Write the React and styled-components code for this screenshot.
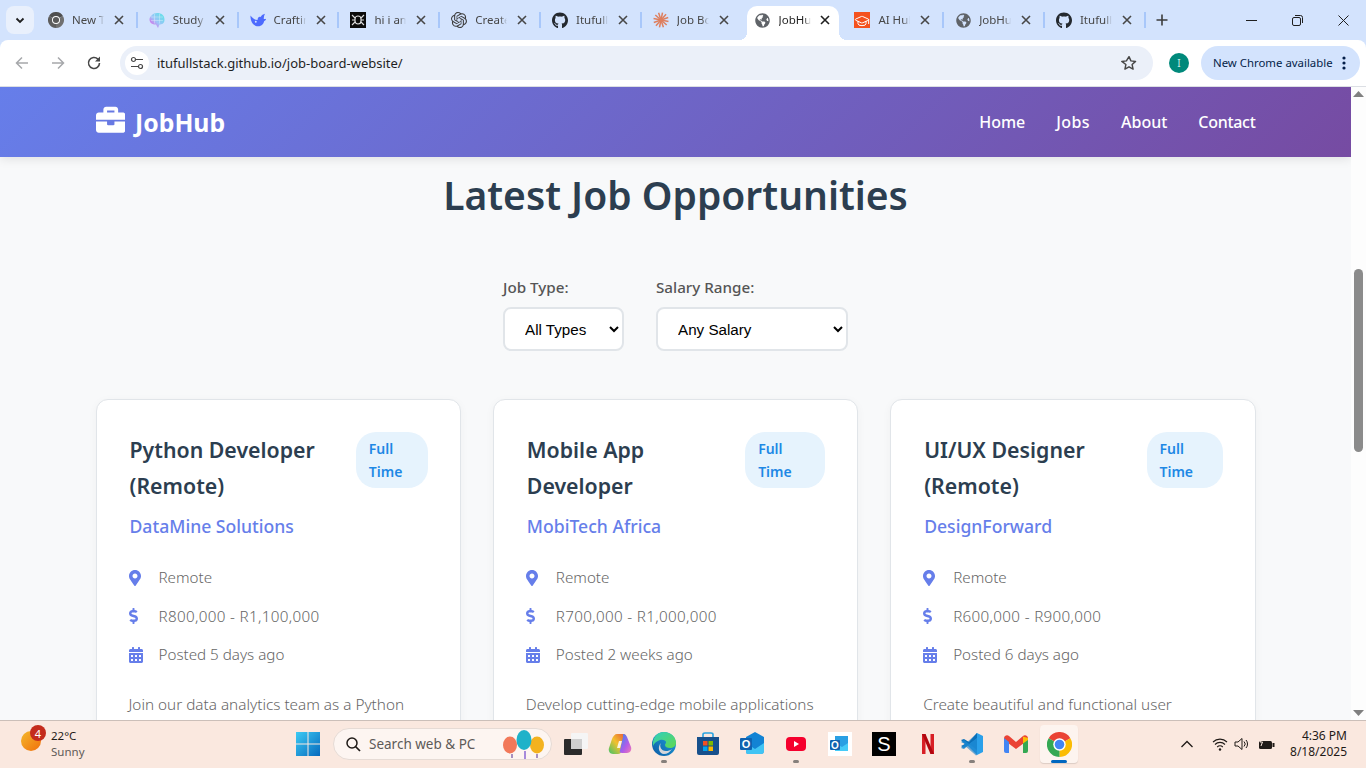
import React from "react";
import styled, { createGlobalStyle } from "styled-components";
import { FaBriefcase, FaMapMarkerAlt, FaDollarSign, FaCalendarAlt, FaGithub, FaGlobeAmericas } from "react-icons/fa";
import { SiOpenai } from "react-icons/si";
import { GraduationCap } from "lucide-react";

const Global = createGlobalStyle`
  html, body { margin: 0; padding: 0; height: 100%; overflow: hidden; }
  body { font-family: "Noto Sans", "Open Sans", sans-serif; }
  #root { height: 100vh; }
  * { box-sizing: border-box; }
`;

const UI = `"Noto Sans", "Open Sans", sans-serif`;
const PAGE = `"Noto Sans", "Open Sans", sans-serif`;

const Screen = styled.div`
  height: 768px; width: 1366px; display: flex; flex-direction: column; overflow: hidden;
  background: #d3e3fd;
`;
/* ---------- tab strip ---------- */
const TabStrip = styled.div`
  height: 40px; flex: none; display: flex; align-items: flex-start; padding-left: 6px; padding-top: 6px;
  background: #d3e3fd; font-family: ${UI};
`;
const TabSearch = styled.div`
  width: 28px; height: 28px; border-radius: 8px; background: #e9f0fc; display: flex; align-items: center; justify-content: center;
  margin-right: 3px; flex: none;
`;
const TabRow = styled.div`display: flex; height: 34px;`;
const Tab = styled.div`
  width: 100.8px; height: 34px; position: relative; display: flex; align-items: center; padding: 0 0 6px ${p => p.$active ? 12 : 11}px; flex: none;
  color: ${p => p.$active ? "#1f1f1f" : "#474747"};
  ${p => p.$sep && `&::after { content: ""; position: absolute; right: 0; top: 6px; height: 16px; width: 2px; background: #a8c7fa; }`}
`;
const ActiveShape = styled.div`
  position: absolute; left: 4px; right: 4px; top: 0; bottom: 0; background: #fff; border-radius: 10px 10px 0 0;
  &::before, &::after { content: ""; position: absolute; bottom: 0; width: 8px; height: 8px; background: radial-gradient(circle at 0 0, transparent 8px, #fff 8px); }
  &::before { left: -8px; }
  &::after { right: -8px; background: radial-gradient(circle at 100% 0, transparent 8px, #fff 8px); }
`;
const Fav = styled.div`width: 16px; height: 16px; flex: none; position: relative; display: flex; align-items: center; justify-content: center;`;
const TabLabel = styled.div`
  position: relative; margin-left: 8px; width: 32px; overflow: hidden; white-space: nowrap; font-size: 11.5px; line-height: 16px;
  -webkit-mask-image: linear-gradient(90deg, #000 78%, transparent 100%); mask-image: linear-gradient(90deg, #000 78%, transparent 100%);
`;
const TabClose = styled.div`position: absolute; left: 76px; top: 8px; width: 12px; height: 12px; display: flex;`;
const NewTab = styled.div`width: 14px; height: 14px; margin: 7px 0 0 9px; flex: none; display: flex;`;
const WinControls = styled.div`margin-left: auto; display: flex; height: 28px; align-items: center;`;
const WinBtn = styled.div`width: 46px; height: 28px; display: flex; align-items: center; justify-content: center;`;

/* ---------- toolbar ---------- */
const Toolbar = styled.div`
  height: 47px; flex: none; background: #fff; border-radius: 8px 8px 0 0; border-bottom: 1px solid #dcdfe4;
  display: flex; align-items: flex-start; padding: 6px 6px 0 4px; font-family: ${UI};
`;
const NavBtn = styled.div`width: 36px; height: 34px; display: flex; align-items: center; justify-content: center; flex: none;`;
const Omnibox = styled.div`
  margin-left: 8px; width: 1033px; height: 34px; border-radius: 17px; background: #ebf0f9; display: flex; align-items: center; padding: 0 16px 0 5px; flex: none;
`;
const InfoChip = styled.div`width: 24px; height: 24px; border-radius: 50%; background: #fff; display: flex; align-items: center; justify-content: center; flex: none;`;
const Url = styled.div`margin-left: 8px; font-size: 13px; color: #1f1f1f; flex: 1; white-space: nowrap;`;
const Avatar = styled.div`
  width: 20px; height: 20px; border-radius: 50%; background: #00897b; color: #cfe9e5; font-size: 10px; display: flex; align-items: center; justify-content: center;
  margin: 7px 0 0 16px; flex: none;
`;
const UpdatePill = styled.div`
  margin-left: 12px; width: 159px; height: 34px; border-radius: 17px; background: #d3e3fd; color: #041e49; font-size: 11.4px; display: flex; align-items: center; padding: 0 0 2px 12px; white-space: nowrap; position: relative;
`;
const PillDots = styled.span`position: absolute; right: 14px; top: 10px; display: flex;`;

/* ---------- page ---------- */
const Viewport = styled.div`flex: 1; min-height: 0; display: flex; background: #f8f9fa; overflow: hidden;`;
const Page = styled.div`flex: 1; min-width: 0; overflow: hidden; font-family: ${PAGE}; position: relative;`;
const Header = styled.header`
  height: 70px; background: linear-gradient(135deg, #667eea 0%, #764ba2 100%); box-shadow: 0 2px 10px rgba(0,0,0,.1); position: relative; z-index: 2;
`;
const HeaderInner = styled.div`
  max-width: 1200px; margin: 0 auto; padding: 0 20px; height: 100%; display: flex; align-items: center; justify-content: space-between; color: #fff;
`;
const Logo = styled.div`display: flex; align-items: center; gap: 10px; font-size: 24.8px; font-weight: 700; svg { margin-top: -4px; }`;
const NavList = styled.nav`display: flex; gap: 31px; font-size: 16px; font-weight: 500;`;
const NavItem = styled.span`letter-spacing: ${p => p.$ls || 0}px;`;
const Main = styled.main`max-width: 1200px; margin: 0 auto; padding: 11px 20px 0;`;
const Title = styled.h2`margin: 0; text-align: center; font-size: 39px; line-height: 54px; font-weight: 600; color: #2c3e50;`;
const Filters = styled.div`display: flex; justify-content: center; gap: 32px; margin-top: 53px;`;
const FilterGroup = styled.div`display: flex; flex-direction: column; align-items: flex-start;`;
const FilterLabel = styled.label`font-size: 15.2px; line-height: 24px; font-weight: 500; color: #555; margin-bottom: 8px;`;
const Select = styled.select`
  height: 44px; width: ${p => p.$w}px; padding: 0 16px; border: 2px solid #e1e5e9; border-radius: 8px; background: #fff; font-family: "Liberation Sans", Arial, sans-serif; font-size: 15.2px; color: #000;
`;
const Grid = styled.div`display: grid; grid-template-columns: repeat(3, 1fr); gap: 32px; margin-top: 48px;`;
const Card = styled.article`
  background: #fff; border: 1px solid #e1e5e9; border-radius: 12px; padding: 32px; box-shadow: 0 2px 10px rgba(0,0,0,.04); height: 400px;
`;
const CardTop = styled.div`display: flex; justify-content: space-between; align-items: flex-start; gap: 16px;`;
const JobTitle = styled.h3`margin: 0; padding-left: 1px; font-size: 21.3px; line-height: 36px; font-weight: 600; color: #2c3e50;`;
const Badge = styled.span`
  flex: none; width: ${p => p.$w}px; padding: 5px 13px; background: #e6f3fd; color: #1e88e5; border-radius: 20px; font-size: 14px; line-height: 23px; font-weight: 600;
`;
const Company = styled.div`margin-top: 8px; padding-left: 1px; font-size: 17.6px; line-height: 29px; font-weight: 500; color: #667eea;`;
const Meta = styled.div`margin-top: 24px; display: flex; flex-direction: column; gap: 13.5px;`;
const MetaRow = styled.div`display: flex; align-items: center; font-size: 15.2px; line-height: 25px; font-weight: 300; color: #666;`;
const MetaIcon = styled.span`width: 30px; flex: none; display: flex; color: #667eea; svg { width: ${p => p.$w}px; height: 16px; }`;
const PayText = styled.span`letter-spacing: .33px;`;
const Desc = styled.p`margin: 25px 0 0; font-size: 15.3px; line-height: 25px; font-weight: 300; color: #666;`;

/* ---------- scrollbar ---------- */
const ScrollTrack = styled.div`width: 15px; flex: none; background: #fdfdfd; display: flex; flex-direction: column; align-items: center; padding-top: 4px;`;
const ScrollThumb = styled.div`width: 9px; height: 183px; border-radius: 5px; background: #8b8b8b; margin-top: 172px;`;
const ScrollDown = styled.div`margin-top: auto; margin-bottom: 4px; display: flex;`;

/* ---------- taskbar ---------- */
const Taskbar = styled.div`
  height: 48px; flex: none; background: #fae8df; border-top: 1px solid #cbbfb9; display: flex; align-items: center; padding-bottom: 1px; font-family: ${UI}; position: relative;
`;
const Weather = styled.div`width: 296px; display: flex; align-items: center; padding-left: 21px; flex: none; position: relative;`;
const Sun = styled.div`width: 20px; height: 20px; border-radius: 50%; background: linear-gradient(135deg, #f4b92c, #f06f0c); flex: none; margin-top: -6px;`;
const CountBadge = styled.div`position: absolute; left: 30px; top: -3px; width: 16px; height: 16px; border-radius: 50%; background: #c42b1c; color: #fff; font-size: 11px; display: flex; align-items: center; justify-content: center; line-height: 1;`;
const WeatherText = styled.div`margin-left: 10px; font-size: 11.5px; line-height: 16px; color: #1f1a17;`;
const Muted = styled.div`color: #5f5a57;`;
const SearchPill = styled.div`
  margin-left: 13px; width: 219px; height: 32px; flex: none; border-radius: 16px; background: #fdf5f1; border: 1px solid #e6dbd5; display: flex; align-items: center; padding-left: 11px; position: relative;
  font-size: 13.5px; color: #5d5a58;
`;
const SearchText = styled.span`margin-left: 8px; white-space: nowrap;`;
const Balloons = styled.span`position: absolute; right: 6px; top: 1px; display: flex;`;
const AppCell = styled.div`
  width: 44px; height: 38px; flex: none; display: flex; align-items: center; justify-content: center; position: relative; border-radius: 4px;
  margin-left: ${p => p.$first ? 2 : 0}px;
  ${p => p.$active && `background: #fdf4ef; box-shadow: 0 1px 1px rgba(0,0,0,.12); width: 38px; margin: 0 4px 0 2px;`}
  ${p => p.$dot && `&::after { content: ""; position: absolute; bottom: 0; left: 50%; margin-left: ${p.$active ? -8 : -3}px; width: ${p.$active ? 16 : 6}px; height: 3px; border-radius: 2px; background: ${p.$active ? "#0067c0" : "#86807c"}; }`}
`;
const Tray = styled.div`margin-left: auto; display: flex; align-items: center; padding-right: 19px;`;
const TrayIcon = styled.span`display: flex; margin-right: ${p => p.$mr || 0}px;`;
const Clock = styled.div`margin-left: 15px; text-align: right; font-size: 12px; line-height: 16px; color: #1f1a17;`;
const OText = styled.text`font-family: "Liberation Sans", sans-serif; font-weight: 700;`;

/* ---------- drawings ---------- */
const X = ({ c = "#474747" }) => (
  <svg width="12" height="12" viewBox="0 0 12 12"><path d="M2 2l8 8M10 2l-8 8" stroke={c} strokeWidth="1.6" /></svg>
);
const ChromeMark = ({ size = 16, mono }) => (
  <svg width={size} height={size} viewBox="0 0 24 24">
    <path d="M12 12L1.6 6A12 12 0 0 1 22.4 6Z" fill={mono ? "#4f4f4f" : "#ea4335"} />
    <path d="M12 12L22.4 6A12 12 0 0 1 12 24Z" fill={mono ? "#707070" : "#fbbc04"} />
    <path d="M12 12L12 24A12 12 0 0 1 1.6 6Z" fill={mono ? "#5e5e5e" : "#34a853"} />
    <circle cx="12" cy="12" r="6" fill="#fff" />
    <circle cx="12" cy="12" r="4.6" fill={mono ? "#5a5a5a" : "#4285f4"} />
  </svg>
);
const BrainIcon = () => (
  <svg width="17" height="17" viewBox="0 0 16 16">
    <defs><linearGradient id="br" x1="0" y1="1" x2="1" y2="0"><stop offset="0" stopColor="#f43fe0" /><stop offset=".45" stopColor="#9fc4f8" /><stop offset="1" stopColor="#55e6e6" /></linearGradient></defs>
    <path d="M8 .5c4 0 7.500 2 7.500 6.500s-3 5-5 5L9 15.500 7 12C3 12 .5 10 .5 7S4 .5 8 .5z" fill="url(#br)" />
    <path d="M2 4.500h12M2 8h12M5.500 1.500v9.500M10.500 1.500v9.500" stroke="#fff" strokeWidth=".5" opacity=".6" />
  </svg>
);
const Whale = () => (
  <svg width="18" height="16" viewBox="0 0 18 16">
    <path d="M.5 3c0 7 3 12 8.500 12 4.500 0 6.500-3.500 7-6 1 0 2-1 2-2.500-1 .5-1.500.5-2.500.5C15.500 4.500 16 2.500 17 1c-2 .5-4 1.500-5 3.500C10 3.500 8.500 5.500 8.500 8 5.500 8 3 6 .5 3z" fill="#4d6bfe" />
    <circle cx="6.500" cy="10" r="1.100" fill="#d3e3fd" />
  </svg>
);
const SpiderIcon = () => (
  <svg width="16" height="16" viewBox="0 0 16 16">
    <rect width="16" height="16" fill="#0b0b0b" />
    <path d="M8 4a3 3 0 0 1 3 3v2a3 3 0 0 1-6 0V7a3 3 0 0 1 3-3z" fill="none" stroke="#ddd" strokeWidth="1.2" />
    <path d="M2 3l3 3M14 3l-3 3M2 8h3M14 8h-3M2 13l3-3M14 13l-3-3" stroke="#ddd" strokeWidth="1.1" />
  </svg>
);
const Burst = () => (
  <svg width="16" height="16" viewBox="0 0 16 16">
    {Array.from({ length: 12 }).map((_, i) => (
      <line key={i} x1="8" y1="8" x2={8 + 7.6 * Math.cos((i * Math.PI) / 6 + 0.2)} y2={8 + 7.6 * Math.sin((i * Math.PI) / 6 + 0.2)} stroke="#de7f5f" strokeWidth="1.5" />
    ))}
  </svg>
);
const CapIcon = () => (
  <svg width="16" height="16" viewBox="0 0 16 16"><rect width="16" height="16" fill="#f4511e" />
    <foreignObject width="16" height="16"><GraduationCap size={16} color="#fff" strokeWidth={1.5} /></foreignObject>
  </svg>
);
const Windows = () => (
  <svg width="24" height="24" viewBox="0 0 24 24">
    <defs><linearGradient id="wn" x1="0" y1="0" x2="1" y2="1"><stop offset="0" stopColor="#3ccbf4" /><stop offset="1" stopColor="#0669bd" /></linearGradient></defs>
    <path d="M0 0h11.500v11.500H0zM12.500 0H24v11.500H12.500zM0 12.500h11.500V24H0zM12.500 12.500H24V24H12.500z" fill="url(#wn)" />
  </svg>
);
const BalloonArt = () => (
  <svg width="44" height="30" viewBox="0 0 44 30">
    <path d="M24 21v8" stroke="#a78bdb" strokeWidth="2" />
    <path d="M11 24v4M36 24v4" stroke="#8a6fb0" strokeWidth="1.5" />
    <ellipse cx="9" cy="15" rx="7" ry="8.500" fill="#f2795a" />
    <ellipse cx="36" cy="15" rx="7" ry="8.500" fill="#f3b21f" />
    <ellipse cx="23" cy="10" rx="7.500" ry="10" fill="#1fb2c9" />
  </svg>
);
const TaskView = () => (
  <svg width="24" height="24" viewBox="0 0 24 24">
    <rect x="7" y="1" width="17" height="16" fill="#f5f5f5" rx="1" />
    <rect x="0" y="7" width="18" height="16" rx="1" fill="#2b2b2b" />
    <rect x="7" y="7" width="11" height="10" fill="#cfcfcf" />
  </svg>
);
const Copilot = () => (
  <svg width="24" height="24" viewBox="0 0 24 24">
    <defs>
      <linearGradient id="cp1" x1="0" y1="1" x2="1" y2="0"><stop offset="0" stopColor="#3fc36b" /><stop offset=".5" stopColor="#f2c12e" /><stop offset="1" stopColor="#e8553a" /></linearGradient>
      <linearGradient id="cp2" x1="0" y1="0" x2="1" y2="1"><stop offset="0" stopColor="#2d8cf0" /><stop offset=".6" stopColor="#b25be8" /><stop offset="1" stopColor="#f27ab5" /></linearGradient>
    </defs>
    <path d="M9 2h6c2 0 3 1 3 3l-4 14c-1 2-2 3-4 3H5c-3 0-5-3-4-6l3-9c1-3 3-5 5-5z" fill="url(#cp1)" />
    <path d="M15 2c2 0 3 1 4 3l4 10c1 3-1 6-4 6h-5c-2 0-3-1-2-3l3-13c0-2 0-3 0-3z" fill="url(#cp2)" />
    <path d="M11 9h3l-2 7h-3z" fill="#fff" opacity=".85" />
  </svg>
);
const Edge = () => (
  <svg width="24" height="24" viewBox="0 0 24 24">
    <defs>
      <linearGradient id="ed" x1="0" y1="1" x2="1" y2="0"><stop offset="0" stopColor="#0c59a4" /><stop offset="1" stopColor="#1fa7e0" /></linearGradient>
      <linearGradient id="ed2" x1="0" y1="0" x2="1" y2="1"><stop offset="0" stopColor="#2ecfc0" /><stop offset="1" stopColor="#62d84e" /></linearGradient>
    </defs>
    <circle cx="12" cy="12" r="12" fill="url(#ed)" />
    <path d="M12 0c7 0 12 5 12 11 0 3-3 5-6 5s-5-1-5-3c0-1 1-1.500 1-3S11 7 8 8 2 11 1 14C0 6 5 0 12 0z" fill="url(#ed2)" />
    <path d="M9 11c-2 3 0 8 5 8 2 0 4-.6 6-2-2 3-5 5-8 5-5 0-7-7-3-11z" fill="#fae8df" opacity=".85" />
  </svg>
);
const Store = () => (
  <svg width="24" height="24" viewBox="0 0 24 24">
    <path d="M7 5V2.500C7 1.500 8 1 9 1h6c1 0 2 .5 2 1.500V5" fill="none" stroke="#2aa3e0" strokeWidth="1.600" />
    <path d="M1 5h22v16a2 2 0 0 1-2 2H3a2 2 0 0 1-2-2z" fill="#17508c" />
    <rect x="7" y="9" width="4.500" height="4.500" fill="#f25022" /><rect x="12.500" y="9" width="4.500" height="4.500" fill="#7fba00" />
    <rect x="7" y="14.500" width="4.500" height="4.500" fill="#00a4ef" /><rect x="12.500" y="14.500" width="4.500" height="4.500" fill="#ffb900" />
  </svg>
);
const Outlook = ({ tile }) => (
  <svg width="24" height="24" viewBox="0 0 24 24">
    {tile && <rect width="24" height="24" fill="#fff" />}
    <path d={tile ? "M7 4h13v15H7z" : "M6 5l9-5 9 5v14a3 3 0 0 1-3 3H8a2 2 0 0 1-2-2z"} fill={tile ? "#2a9fe3" : "#1283d4"} />
    <path d={tile ? "M7 11l7 4 6-4v8H7z" : "M6 11l9 6 9-6v8a3 3 0 0 1-3 3H8a2 2 0 0 1-2-2z"} fill="#50d9ff" opacity=".75" />
    <rect x={tile ? 2 : 0} y={tile ? 8 : 6} width={tile ? 10 : 12} height={tile ? 10 : 12} rx="1" fill="#0f62b0" />
    <OText x={tile ? 7 : 6} y={tile ? 16.500 : 15.800} fontSize={tile ? 10 : 11} fill="#fff" textAnchor="middle">O</OText>
  </svg>
);
const YouTube = () => (
  <svg width="20" height="14" viewBox="0 0 20 14"><rect width="20" height="14" rx="4" fill="#f5002d" /><path d="M8 4l5 3-5 3z" fill="#fff" /></svg>
);
const STile = () => (
  <svg width="24" height="24" viewBox="0 0 24 24"><rect width="24" height="24" fill="#000" /><OText x="12" y="19" fontSize="20" fill="#fff" textAnchor="middle" style={{ fontWeight: 400 }}>S</OText></svg>
);
const Netflix = () => (
  <svg width="12" height="20" viewBox="0 0 12 20">
    <rect x="0" width="3.500" height="20" fill="#d81f26" /><rect x="8.500" width="3.500" height="20" fill="#d81f26" />
    <polygon points="0,0 3.500,0 12,20 8.500,20" fill="#b1060f" />
  </svg>
);
const VSCode = () => (
  <svg width="24" height="24" viewBox="0 0 24 24">
    <path d="M17 1l6 3v16l-6 3-10-10z" fill="#2aa0ea" />
    <path d="M17 1v22l-1 .5L4 13l12-11z" fill="#1a7ec6" opacity=".6" />
    <path d="M17 6L4 16 1 14l4-2-4-4 3-1 5 3 8-9z" fill="#0b6fb8" />
    <path d="M17 18L4 8 1 10l4 2-4 4 3 1 13-11v12z" fill="#1a86d0" opacity=".85" />
  </svg>
);
const Gmail = () => (
  <svg width="24" height="18" viewBox="0 0 24 18">
    <path d="M0 3a3 3 0 0 1 5-2l7 6 7-6a3 3 0 0 1 5 2v2l-12 9L0 5z" fill="#ea4335" />
    <path d="M0 3v13a2 2 0 0 0 2 2h3V7z" fill="#4285f4" /><path d="M24 3v13a2 2 0 0 1-2 2h-3V7z" fill="#34a853" />
    <path d="M19 1.500l5 1.500v2l-5 3.500z" fill="#fbbc04" />
  </svg>
);

const tabs = [
  { t: "New Tab", i: <ChromeMark mono /> },
  { t: "Study mode", i: <BrainIcon /> },
  { t: "Crafting", i: <Whale /> },
  { t: "hi i am", i: <SpiderIcon /> },
  { t: "Create", i: <SiOpenai size={16} color="#3d3d3d" /> },
  { t: "Itufullstack", i: <FaGithub size={17} color="#24292f" /> },
  { t: "Job Board", i: <Burst /> },
  { t: "JobHub", i: <FaGlobeAmericas size={15} color="#5f6368" />, a: true },
  { t: "AI Hub", i: <CapIcon /> },
  { t: "JobHub", i: <FaGlobeAmericas size={15} color="#5f6368" /> },
  { t: "Itufullstack", i: <FaGithub size={17} color="#24292f" /> },
];

const jobs = [
  { title: ["Python Developer", "(Remote)"], co: "DataMine Solutions", pay: "R800,000 - R1,100,000", when: "Posted 5 days ago", text: "Join our data analytics team as a Python", w: 72 },
  { title: ["Mobile App", "Developer"], co: "MobiTech Africa", pay: "R700,000 - R1,000,000", when: "Posted 2 weeks ago", text: "Develop cutting-edge mobile applications", w: 80 },
  { title: ["UI/UX Designer", "(Remote)"], co: "DesignForward", pay: "R600,000 - R900,000", when: "Posted 6 days ago", text: "Create beautiful and functional user", w: 76 },
];

export default function App() {
  return (
    <Screen>
      <Global />
      <TabStrip>
        <TabSearch>
          <svg width="12" height="12" viewBox="0 0 12 12"><path d="M2.500 4.500L6 8l3.500-3.500" fill="none" stroke="#1f1f1f" strokeWidth="1.800" /></svg>
        </TabSearch>
        <TabRow>
          {tabs.map((tab, i) => (
            <Tab key={i} $active={tab.a} $sep={!tab.a && i !== 6}>
              {tab.a && <ActiveShape />}
              <Fav>{tab.i}</Fav>
              <TabLabel>{tab.t}</TabLabel>
              <TabClose><X c={tab.a ? "#1f1f1f" : "#474747"} /></TabClose>
            </Tab>
          ))}
        </TabRow>
        <NewTab>
          <svg width="14" height="14" viewBox="0 0 14 14"><path d="M7 1.500v11M1.500 7h11" stroke="#3c3c3c" strokeWidth="1.600" /></svg>
        </NewTab>
        <WinControls>
          <WinBtn><svg width="11" height="11" viewBox="0 0 11 11"><path d="M0 5.500h11" stroke="#1f1f1f" /></svg></WinBtn>
          <WinBtn><svg width="11" height="11" viewBox="0 0 11 11"><rect x=".5" y="2.500" width="8" height="8" rx="1.500" fill="none" stroke="#1f1f1f" /><path d="M3 .5h5.500a2 2 0 0 1 2 2V8" fill="none" stroke="#1f1f1f" /></svg></WinBtn>
          <WinBtn><svg width="11" height="11" viewBox="0 0 11 11"><path d="M.5.5l10 10M10.500.5l-10 10" stroke="#1f1f1f" /></svg></WinBtn>
        </WinControls>
      </TabStrip>

      <Toolbar>
        <NavBtn><svg width="16" height="16" viewBox="0 0 16 16"><path d="M14 8H2.500M8 2.500L2.500 8 8 13.500" fill="none" stroke="#a6a8ab" strokeWidth="1.500" /></svg></NavBtn>
        <NavBtn><svg width="16" height="16" viewBox="0 0 16 16"><path d="M2 8h11.500M8 2.500L13.500 8 8 13.500" fill="none" stroke="#a6a8ab" strokeWidth="1.500" /></svg></NavBtn>
        <NavBtn><svg width="16" height="16" viewBox="0 0 16 16"><path d="M13.500 8a5.500 5.500 0 1 1-1.600-3.900L13.500 5.700" fill="none" stroke="#474747" strokeWidth="1.600" /><path d="M14 1.500V6.500H9z" fill="#474747" /></svg></NavBtn>
        <Omnibox>
          <InfoChip>
            <svg width="14" height="14" viewBox="0 0 14 14"><circle cx="3.500" cy="3.500" r="2" fill="none" stroke="#474747" strokeWidth="1.200" /><path d="M6 3.500h7M1 10.500h7" stroke="#474747" strokeWidth="1.200" /><circle cx="10.500" cy="10.500" r="2" fill="none" stroke="#474747" strokeWidth="1.200" /></svg>
          </InfoChip>
          <Url>itufullstack.github.io/job-board-website/</Url>
          <svg width="16" height="16" viewBox="0 0 24 24"><path d="M12 2.500l2.900 6.300 6.900.8-5.100 4.700 1.400 6.800-6.100-3.400-6.100 3.400 1.400-6.800L1.200 9.600l6.900-.8z" fill="none" stroke="#474747" strokeWidth="2.200" strokeLinejoin="round" /></svg>
        </Omnibox>
        <Avatar>I</Avatar>
        <UpdatePill>
          New Chrome available
          <PillDots><svg width="4" height="14" viewBox="0 0 4 14"><circle cx="2" cy="2" r="1.600" fill="#041e49" /><circle cx="2" cy="7" r="1.600" fill="#041e49" /><circle cx="2" cy="12" r="1.600" fill="#041e49" /></svg></PillDots>
        </UpdatePill>
      </Toolbar>

      <Viewport>
        <Page>
          <Header>
            <HeaderInner>
              <Logo><FaBriefcase size={29.5} />JobHub</Logo>
              <NavList>
                <NavItem>Home</NavItem>
                <NavItem $ls={0.4}>Jobs</NavItem>
                <NavItem>About</NavItem>
                <NavItem $ls={-0.3}>Contact</NavItem>
              </NavList>
            </HeaderInner>
          </Header>
          <Main>
            <Title>Latest Job Opportunities</Title>
            <Filters>
              <FilterGroup>
                <FilterLabel>Job Type:</FilterLabel>
                <Select $w={121} defaultValue="All Types"><option>All Types</option></Select>
              </FilterGroup>
              <FilterGroup>
                <FilterLabel>Salary Range:</FilterLabel>
                <Select $w={192} defaultValue="Any Salary"><option>Any Salary</option></Select>
              </FilterGroup>
            </Filters>
            <Grid>
              {jobs.map((j) => (
                <Card key={j.co}>
                  <CardTop>
                    <JobTitle>{j.title[0]}<br />{j.title[1]}</JobTitle>
                    <Badge $w={j.w}>Full Time</Badge>
                  </CardTop>
                  <Company>{j.co}</Company>
                  <Meta>
                    <MetaRow><MetaIcon $w={12}><FaMapMarkerAlt /></MetaIcon>Remote</MetaRow>
                    <MetaRow><MetaIcon $w={9}><FaDollarSign /></MetaIcon><PayText>{j.pay}</PayText></MetaRow>
                    <MetaRow><MetaIcon $w={14}><FaCalendarAlt /></MetaIcon>{j.when}</MetaRow>
                  </Meta>
                  <Desc>{j.text}</Desc>
                </Card>
              ))}
            </Grid>
          </Main>
        </Page>
        <ScrollTrack>
          <svg width="11" height="6" viewBox="0 0 11 6"><path d="M5.500 0L11 6H0z" fill="#808080" /></svg>
          <ScrollThumb />
          <ScrollDown><svg width="11" height="6" viewBox="0 0 11 6"><path d="M5.500 6L11 0H0z" fill="#808080" /></svg></ScrollDown>
        </ScrollTrack>
      </Viewport>

      <Taskbar>
        <Weather>
          <Sun />
          <CountBadge>4</CountBadge>
          <WeatherText>22°C<Muted>Sunny</Muted></WeatherText>
        </Weather>
        <Windows />
        <SearchPill>
          <svg width="16" height="16" viewBox="0 0 16 16"><circle cx="7" cy="7" r="5" fill="none" stroke="#1f1a17" strokeWidth="1.500" /><path d="M10.500 10.500L15 15" stroke="#1f1a17" strokeWidth="1.700" /></svg>
          <SearchText>Search web &amp; PC</SearchText>
          <Balloons><BalloonArt /></Balloons>
        </SearchPill>
        <AppCell $first><TaskView /></AppCell>
        <AppCell><Copilot /></AppCell>
        <AppCell $dot><Edge /></AppCell>
        <AppCell><Store /></AppCell>
        <AppCell><Outlook /></AppCell>
        <AppCell $dot><YouTube /></AppCell>
        <AppCell><Outlook tile /></AppCell>
        <AppCell><STile /></AppCell>
        <AppCell><Netflix /></AppCell>
        <AppCell $dot><VSCode /></AppCell>
        <AppCell><Gmail /></AppCell>
        <AppCell $active $dot><ChromeMark size={25} /></AppCell>
        <Tray>
          <TrayIcon $mr={18}><svg width="14" height="8" viewBox="0 0 14 8"><path d="M1.500 7L7 1.500 12.500 7" fill="none" stroke="#1f1a17" strokeWidth="1.300" /></svg></TrayIcon>
          <TrayIcon $mr={6}><svg width="16" height="14" viewBox="0 0 16 14"><path d="M1 5a10 10 0 0 1 14 0M3 7.500a7 7 0 0 1 10 0M5.200 10a4 4 0 0 1 5.600 0" fill="none" stroke="#1f1a17" strokeWidth="1.100" /><circle cx="8" cy="12.500" r="1.200" fill="#1f1a17" /></svg></TrayIcon>
          <TrayIcon $mr={8}><svg width="16" height="14" viewBox="0 0 16 14"><path d="M1 5h3l4-3.500v11L4 9H1z" fill="none" stroke="#1f1a17" /><path d="M10 4.500a3.500 3.500 0 0 1 0 5M12 3a6 6 0 0 1 0 8" fill="none" stroke="#1f1a17" /></svg></TrayIcon>
          <TrayIcon><svg width="17" height="14" viewBox="0 0 17 14"><rect x="1" y="4" width="13" height="8" rx="1.500" fill="#1f1a17" /><rect x="14.500" y="6" width="2" height="4" fill="#1f1a17" /><path d="M4 0L2 5h2.500L3 9" stroke="#fae8df" fill="none" /></svg></TrayIcon>
          <Clock>4:36 PM<br />8/18/2025</Clock>
        </Tray>
      </Taskbar>
    </Screen>
  );
}
